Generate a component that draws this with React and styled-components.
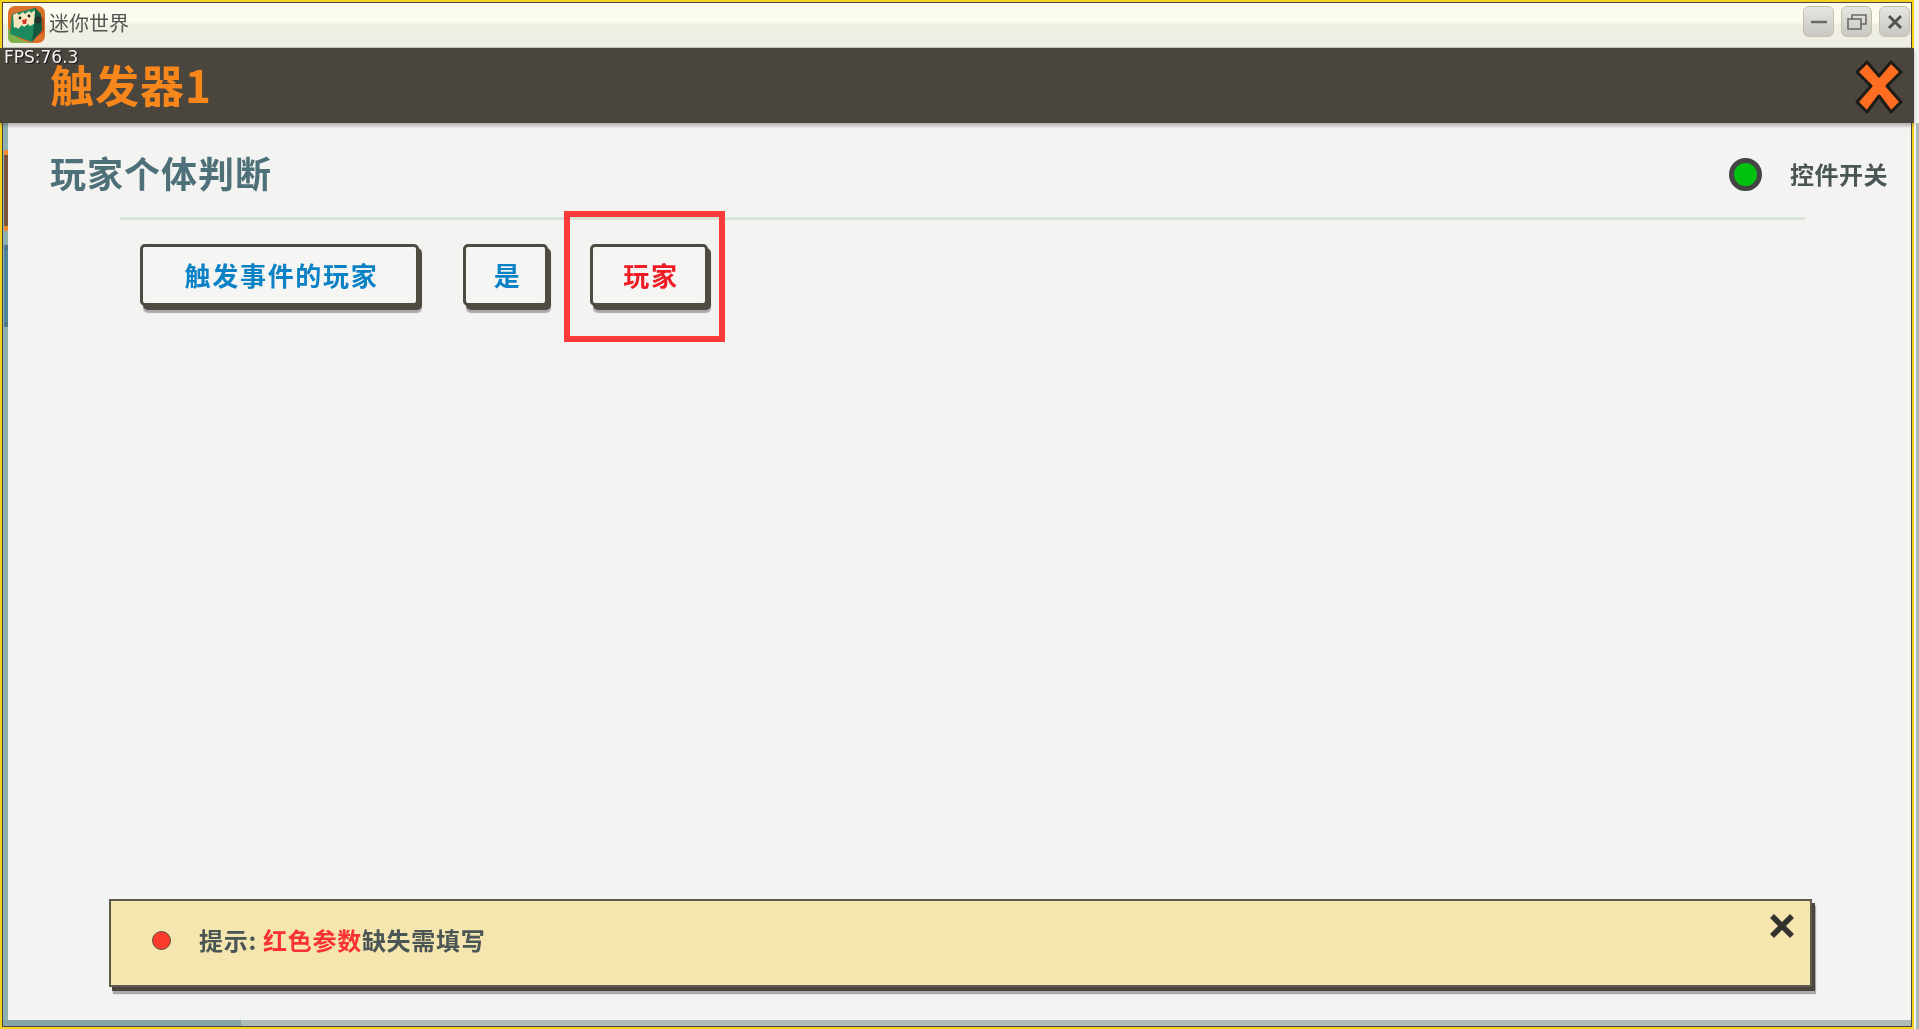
import React from "react";
import styled, { createGlobalStyle } from "styled-components";

const GlobalStyle = createGlobalStyle`
  html, body {
    margin: 0;
    padding: 0;
    height: 100%;
    overflow: hidden;
    background: #f3f3f1;
  }
  #root {
    height: 100%;
  }
  * {
    box-sizing: border-box;
  }
`;

const cjk = `"Noto Sans CJK SC", "Noto Sans", sans-serif`;

const Page = styled.div`
  position: relative;
  display: flex;
  flex-direction: column;
  width: 1919px;
  height: 1029px;
  overflow: hidden;
  padding-right: 5px;
  background: #f3f3f1;
  font-family: ${cjk};
`;

const Frame = styled.div`
  position: absolute;
  left: 0;
  top: 0;
  width: 1914px;
  height: 1029px;
  border: 2px solid #f2d21f;
  outline: 1px solid #4a463e;
  outline-offset: -3px;
  pointer-events: none;
`;

const RightEdge = styled.div`
  position: absolute;
  right: 0;
  top: 123px;
  bottom: 0;
  width: 3px;
  background: #a9b9b4;
`;

const TitleBar = styled.div`
  display: flex;
  align-items: center;
  flex: 0 0 48px;
  padding: 2px 4px 0 8px;
  background: linear-gradient(to bottom, #fbfbf0 0%, #fbfbf0 45%, #efeee2 55%, #f0efe6 100%);
  border-bottom: 1px solid #c4c2b2;
`;

const WindowTitle = styled.span`
  margin-left: 4px;
  margin-bottom: 3px;
  font-size: 20px;
  line-height: 24px;
  color: #555;
  filter: blur(0.4px);
`;

const WindowButtons = styled.div`
  display: flex;
  gap: 7px;
  margin-left: auto;
  margin-bottom: 6px;
`;

const WindowButton = styled.div`
  display: flex;
  align-items: center;
  justify-content: center;
  width: 31px;
  height: 31px;
  border: 1px solid #c9bfa9;
  border-radius: 6px;
  background: linear-gradient(to bottom, #e6e6e0, #c8c8c2);
`;

const Header = styled.div`
  position: relative;
  display: flex;
  align-items: center;
  justify-content: space-between;
  flex: 0 0 75px;
  padding: 0 11px 0 50px;
  background: #4a463e;
  box-shadow: 0 3px 3px rgba(74, 70, 62, 0.35);
  z-index: 1;
`;

const Fps = styled.span`
  position: absolute;
  left: 4px;
  top: 0;
  font-family: "DejaVu Sans", sans-serif;
  font-size: 17px;
  line-height: 19px;
  color: #f4f4f4;
  text-shadow: 1px 1px 1px #111;
  filter: blur(0.3px);
`;

const HeaderTitle = styled.h1`
  margin: 0 0 4px;
  font-size: 44px;
  line-height: 56px;
  font-weight: 700;
  letter-spacing: 1px;
  color: #f7861b;
  filter: blur(0.4px);
`;

const Main = styled.div`
  display: flex;
  flex: 1;
  min-height: 0;
`;

const SideStrip = styled.div`
  display: flex;
  flex-direction: column;
  flex: 0 0 9px;
  padding: 27px 0 0 4px;
  background: linear-gradient(to right, #8fb0b0 0, #8fb0b0 8px, #f3f3f1 8px);
`;

const SideMark = styled.div`
  width: 4px;
  height: ${(p) => p.$height}px;
  margin-bottom: ${(p) => p.$gap}px;
  background: ${(p) => p.$color};
  border-top: 5px solid ${(p) => p.$edge};
  border-bottom: 5px solid ${(p) => p.$edge};
`;

const Content = styled.div`
  display: flex;
  flex-direction: column;
  flex: 1;
  min-width: 0;
  padding: 27px 26px 33px 41px;
`;

const SectionRow = styled.div`
  display: flex;
  align-items: center;
  justify-content: space-between;
  height: 44px;
`;

const SectionTitle = styled.h2`
  margin: 0;
  font-size: 36px;
  line-height: 44px;
  font-weight: 700;
  letter-spacing: 1px;
  color: #4e7078;
  filter: blur(0.4px);
`;

const Toggle = styled.div`
  display: flex;
  align-items: center;
  gap: 28px;
  margin-top: 4px;
`;

const ToggleDot = styled.div`
  width: 33px;
  height: 33px;
  border-radius: 50%;
  border: 5px solid #444;
  background: #00c010;
`;

const ToggleLabel = styled.span`
  font-size: 24px;
  line-height: 30px;
  font-weight: 700;
  letter-spacing: 0.5px;
  color: #4a5555;
  filter: blur(0.3px);
`;

const Divider = styled.div`
  height: 3px;
  margin: 23px 83px 0 70px;
  background: #d9e4d8;
`;

const ParamRow = styled.div`
  display: flex;
  align-items: flex-start;
  gap: 44px;
  margin-top: 24px;
  padding-left: 90px;
`;

const HighlightBox = styled.div`
  position: relative;
  display: flex;
  margin: -33px 0 0 -28px;
  padding: 27px 11px 30px 20px;
  border: 6px solid #fc3a3a;
`;

const ParamButton = styled.button`
  width: ${(p) => p.$width}px;
  height: 62px;
  padding: 0 0 2px 4px;
  border: 3px solid #4f4b42;
  border-radius: 5px;
  background: #f5f5f3;
  box-shadow: 3px 4px 0 #4f4b42, 3px 7px 1px #aaa;
  font-family: ${cjk};
  font-size: 26px;
  font-weight: 700;
  letter-spacing: 1.7px;
  color: ${(p) => (p.$missing ? "#ee1c25" : "#0b82c6")};
`;

const ButtonText = styled.span`
  display: block;
  filter: blur(0.4px);
`;

const Tip = styled.div`
  position: relative;
  display: flex;
  align-items: center;
  gap: 28px;
  height: 88px;
  margin: auto 76px 0 59px;
  padding: 0 0 6px 41px;
  border: 2px solid #5e5a4e;
  background: #f5e5ae;
  box-shadow: 3px 4px 0 #4a463e, 4px 7px 1px #aaa;
`;

const TipDot = styled.div`
  width: 19px;
  height: 19px;
  border-radius: 50%;
  border: 1px solid #5e4a3a;
  background: #fb3c2c;
`;

const TipText = styled.span`
  font-size: 24px;
  line-height: 30px;
  font-weight: 700;
  letter-spacing: 0.7px;
  color: #4a5555;
  filter: blur(0.4px);
`;

const TipRed = styled.span`
  color: #fb3232;
`;

const TipClose = styled.svg`
  position: absolute;
  right: 15px;
  top: 12px;
`;

const BottomStrip = styled.div`
  flex: 0 0 7px;
  margin-bottom: 2px;
  background: linear-gradient(to right, #86a5a8 0, #86a5a8 241px, #aebcb8 241px);
`;

function Logo() {
  return (
    <svg width="37" height="37" viewBox="0 0 37 37">
      <rect width="37" height="37" rx="7" fill="#d9702c" />
      <path d="M0 22 Q10 36 26 37 L6 37 Q0 37 0 31Z" fill="#7fb24a" />
      <path d="M25 6 L36 12 L36 26 L25 33Z" fill="#b84f20" />
      <path d="M4 8 L27 2 L33 8 L34 24 L24 36 L2 28Z" fill="#1b8a5f" />
      <path d="M27 2 L33 8 L34 24 L24 36 L26 20Z" fill="#14573f" />
      <path d="M5 9 L9 7 L11 9 L15 6 L17 8 L21 5 L23 7 L27 4 L26 18 L22 20 L20 18 L16 21 L14 19 L10 23 L8 21 L6 22Z" fill="#f5e7bf" />
      <circle cx="12" cy="12" r="1.4" fill="#222" />
      <circle cx="21" cy="10" r="1.4" fill="#222" />
      <path d="M14 14 L19 13 L18 18 L15 18Z" fill="#d8352a" />
      <circle cx="30" cy="14" r="3.4" fill="#26302c" />
    </svg>
  );
}

function CloseMark() {
  return (
    <svg width="48" height="56" viewBox="0 0 48 56">
      <path
        d="M12 4 L24 18 L36 4 L46 14 L32 28 L46 44 L36 54 L24 38 L12 54 L2 44 L16 28 L2 14Z"
        fill="#ff6e20"
        stroke="#1f1c18"
        strokeWidth="3"
        strokeLinejoin="round"
      />
    </svg>
  );
}

export default function App() {
  return (
    <Page>
      <GlobalStyle />
      <TitleBar>
        <Logo />
        <WindowTitle>迷你世界</WindowTitle>
        <WindowButtons>
          <WindowButton>
            <svg width="18" height="18" viewBox="0 0 18 18">
              <path d="M1 9 H17" stroke="#6c6a62" strokeWidth="2.5" />
            </svg>
          </WindowButton>
          <WindowButton>
            <svg width="20" height="18" viewBox="0 0 20 18" fill="none" stroke="#6c6a62" strokeWidth="1.6">
              <rect x="1" y="6" width="13" height="10" />
              <path d="M5 6 V2 H19 V11 H14" />
            </svg>
          </WindowButton>
          <WindowButton>
            <svg width="18" height="18" viewBox="0 0 18 18">
              <path d="M3 3 L15 15 M15 3 L3 15" stroke="#55534c" strokeWidth="3" />
            </svg>
          </WindowButton>
        </WindowButtons>
      </TitleBar>
      <Header>
        <Fps>FPS:76.3</Fps>
        <HeaderTitle>触发器1</HeaderTitle>
        <CloseMark />
      </Header>
      <Main>
        <SideStrip>
          <SideMark $height={81} $gap={14} $color="#7c5238" $edge="#f08a30" />
          <SideMark $height={82} $gap={0} $color="#4d8499" $edge="#4d7688" />
        </SideStrip>
        <Content>
          <SectionRow>
            <SectionTitle>玩家个体判断</SectionTitle>
            <Toggle>
              <ToggleDot />
              <ToggleLabel>控件开关</ToggleLabel>
            </Toggle>
          </SectionRow>
          <Divider />
          <ParamRow>
            <ParamButton $width={279}>
              <ButtonText>触发事件的玩家</ButtonText>
            </ParamButton>
            <ParamButton $width={85}>
              <ButtonText>是</ButtonText>
            </ParamButton>
            <HighlightBox>
              <ParamButton $width={118} $missing>
                <ButtonText>玩家</ButtonText>
              </ParamButton>
            </HighlightBox>
          </ParamRow>
          <Tip>
            <TipDot />
            <TipText>
              提示: <TipRed>红色参数</TipRed>缺失需填写
            </TipText>
            <TipClose width="26" height="26" viewBox="0 0 26 26">
              <path d="M3 3 L23 23 M23 3 L3 23" stroke="#33322d" strokeWidth="5.5" />
            </TipClose>
          </Tip>
        </Content>
      </Main>
      <BottomStrip />
      <Frame />
      <RightEdge />
    </Page>
  );
}
